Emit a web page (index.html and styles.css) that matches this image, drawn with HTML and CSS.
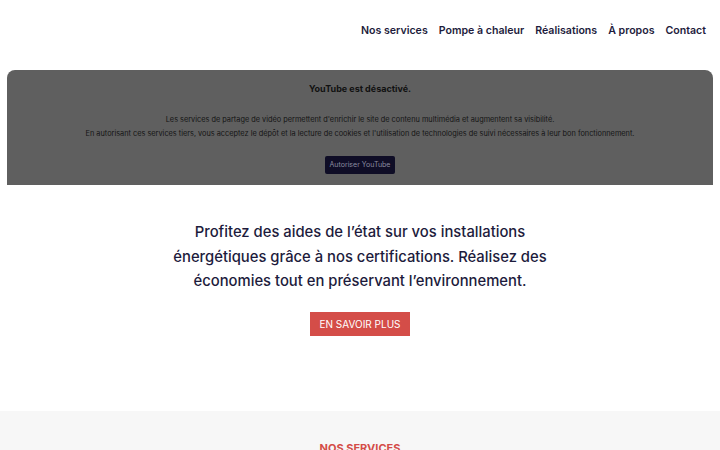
FILE: index.html
```html
<!DOCTYPE html>
<html lang="fr">
<head>
    <meta charset="UTF-8">
    <title>Accueil</title>
    <link rel="stylesheet" href="styles.css">
</head>
<body>
    <header class="header">
        <nav class="nav">
            <a href="#">Nos services</a>
            <a href="#">Pompe à chaleur</a>
            <a href="#">Réalisations</a>
            <a href="#">À propos</a>
            <a href="#">Contact</a>
        </nav>
    </header>

    <div class="video">
        <p class="video-title">YouTube est désactivé.</p>
        <p class="video-text">Les services de partage de vidéo permettent d'enrichir le site de contenu multimédia et augmentent sa visibilité.</p>
        <p class="video-text">En autorisant ces services tiers, vous acceptez le dépôt et la lecture de cookies et l'utilisation de technologies de suivi nécessaires à leur bon fonctionnement.</p>
        <a href="#" class="video-btn">Autoriser YouTube</a>
    </div>

    <section class="intro">
        <p class="intro-text">Profitez des aides de l’état sur vos installations énergétiques grâce à nos certifications. Réalisez des économies tout en préservant l’environnement.</p>
        <a href="#" class="btn-red">EN SAVOIR PLUS</a>
    </section>

    <section class="services">
        <h2 class="services-title">NOS SERVICES</h2>
    </section>
</body>
</html>
```

FILE: styles.css
```css
* {
    margin: 0;
    padding: 0;
    box-sizing: border-box;
}
body {
    font-family: "Inter", "Open Sans", sans-serif;
    color: #1d1b3c;
    background: #fff;
}
a {
    text-decoration: none;
    color: inherit;
}
.header {
    height: 70px;
    display: flex;
    justify-content: flex-end;
    padding: 24px 14px 0 0;
}
.nav {
    display: flex;
    gap: 11px;
}
.nav a {
    font-size: 10.6px;
    font-weight: 600;
    color: #1d1b3c;
}
.video {
    margin: 0 7px;
    height: 115px;
    background: #5f5f5f;
    border-radius: 8px 8px 0 0;
    text-align: center;
    padding-top: 13px;
    color: #111;
}
.video-title {
    font-size: 9px;
    font-weight: 700;
    margin-bottom: 19px;
}
.video-text {
    font-size: 7.35px;
    line-height: 14px;
    color: #141414;
}
.video-btn {
    display: inline-block;
    margin-top: 15px;
    background: #0f0d26;
    color: #8c8ca0;
    font-size: 7px;
    padding: 0 5px;
    line-height: 18px;
    border-radius: 2px;
}
.intro {
    height: 226px;
    text-align: center;
    padding-top: 35px;
}
.intro-text {
    width: 380px;
    margin: 0 auto;
    font-size: 14.8px;
    line-height: 24.5px;
    font-weight: 500;
}
.btn-red {
    display: inline-block;
    margin-top: 18px;
    background: #d44d48;
    color: #fff;
    font-size: 10px;
    line-height: 24px;
    padding: 0 9px;
}
.services {
    background: #f7f7f7;
    padding-top: 30px;
    height: 120px;
    text-align: center;
}
.services-title {
    font-size: 11px;
    font-weight: 700;
    color: #d44d48;
}
```
